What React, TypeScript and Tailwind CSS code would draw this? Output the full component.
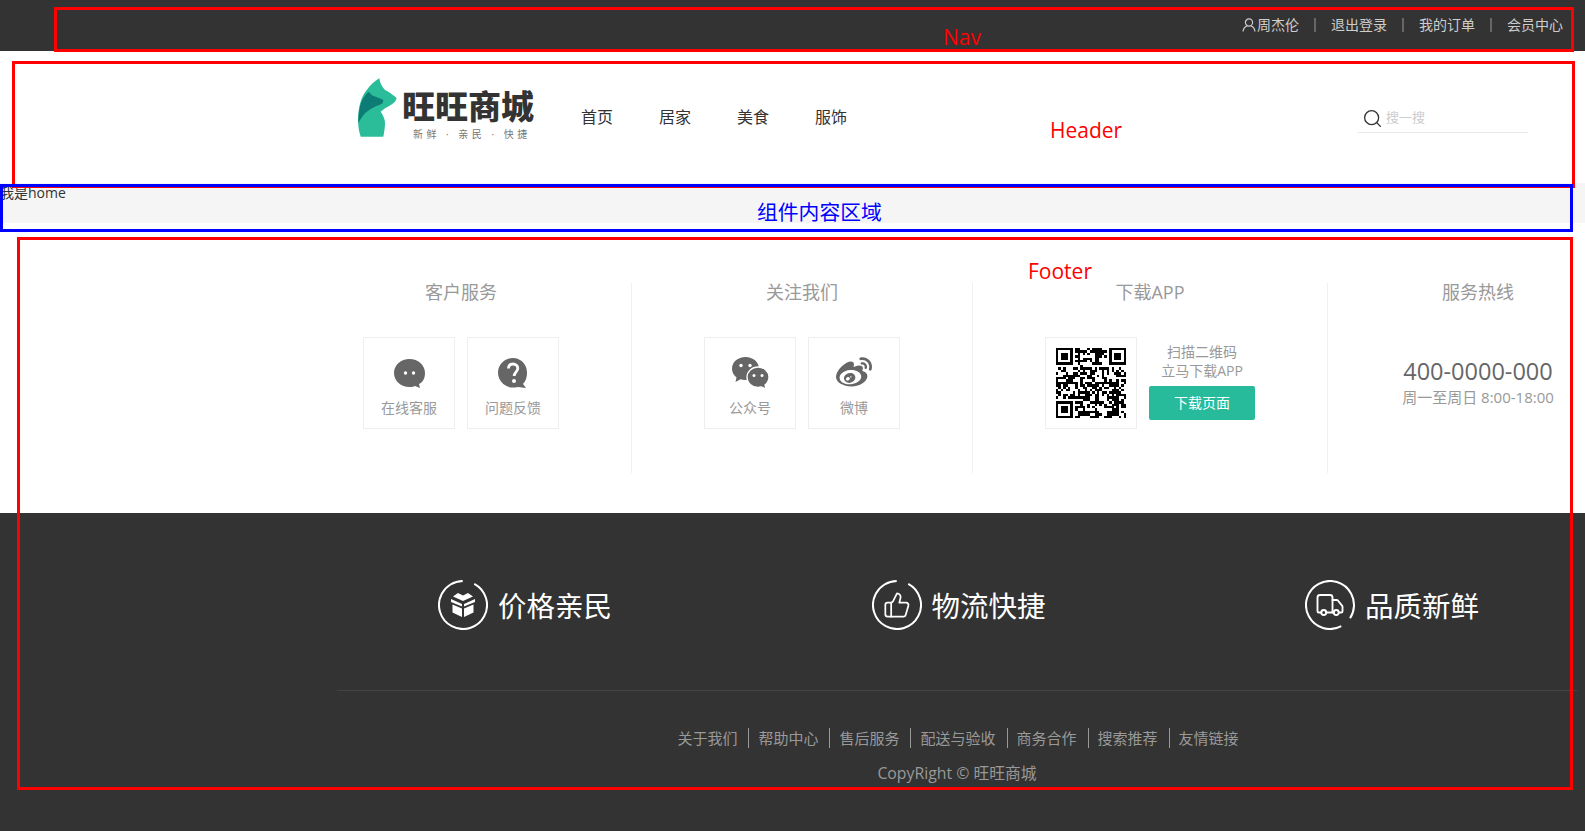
import React from "react";
import { FaWeibo } from "react-icons/fa";
import { Search, ThumbsUp, Truck } from "lucide-react";

const topLinks = ["退出登录", "我的订单", "会员中心"];
const menu = ["首页", "居家", "美食", "服饰"];
const bottomLinks = ["关于我们", "帮助中心", "售后服务", "配送与验收", "商务合作", "搜索推荐", "友情链接"];

// fake qr pattern, same result on every run
const qrSize = 29;
const qrCells = () => {
  const cells: { x: number; y: number }[] = [];
  let seed = 73;
  const inFinder = (x: number, y: number) =>
    (x < 8 && y < 8) || (x > 20 && y < 8) || (x < 8 && y > 20);
  for (let y = 0; y < qrSize; y++) {
    for (let x = 0; x < qrSize; x++) {
      seed = (seed * 1103515245 + 12345) & 0x7fffffff;
      if (!inFinder(x, y) && (seed >> 16) % 100 < 52) cells.push({ x, y });
    }
  }
  return cells;
};

const Finder = ({ x, y }: { x: number; y: number }) => (
  <g>
    <path d={`M${x} ${y}h7v7h-7z M${x + 1} ${y + 1}v5h5v-5z`} fillRule="evenodd" />
    <rect x={x + 2} y={y + 2} width="3" height="3" />
  </g>
);

const QrCode = () => (
  <svg viewBox={`0 0 ${qrSize} ${qrSize}`} className="w-[70px] h-[70px]" shapeRendering="crispEdges" fill="#000">
    {qrCells().map((c) => (
      <rect key={`${c.x}-${c.y}`} x={c.x} y={c.y} width="1" height="1" />
    ))}
    <Finder x={0} y={0} />
    <Finder x={22} y={0} />
    <Finder x={0} y={22} />
  </svg>
);

const Logo = () => (
  <svg viewBox="0 0 46 60" className="w-[46px] h-[60px]">
    <path
      d="M21.300 0.300 C22 5 24 9 27 12 C31 13.500 35 17 38.700 20.300 L37 23.700 C34 26.500 30 28.500 27 30.300 L22.700 33.700 C25 37 27 41 27 45 C27 50 26 55 25.300 58.700 L2.700 58.700 C1.500 55 0.500 51 0.300 47 C0 40 0.300 34 1.300 28.700 C3 21 5.500 16 8.700 12 C12 7 17 3 21.300 0.300 Z"
      fill="#2bbd99"
    />
    <path
      d="M10.300 13.700 C12 15 13.500 17 15.300 18 C18.500 19 22 20 25.300 22 L24.700 25.300 C22 27 19.500 27.500 17 28.700 C13 30.500 10 32.500 7 35.300 C4 38.500 2 42 0.300 45.300 C0.200 40 0.500 36 1.300 32 C2 27.500 3.500 23.500 5.300 20.300 C7 17.500 8.500 15.500 10.300 13.700 Z"
      fill="#0c7c74"
    />
  </svg>
);

const ChatIcon = () => (
  <svg viewBox="0 0 31 29" className="w-[31px] h-[29px]" fill="#666">
    <path d="M15.5 0C24 0 31 6 31 14 C31 19 29 23 25 25 L26 29 L21 27 C19 28 17 28 15.5 28 C7 28 0 22 0 14 C0 6 7 0 15.5 0Z" />
    <circle cx="11.5" cy="14" r="1.7" fill="#fff" />
    <circle cx="19.5" cy="14" r="1.7" fill="#fff" />
  </svg>
);

const QuestionIcon = () => (
  <svg viewBox="0 0 30 30" className="w-[30px] h-[30px]" fill="#666">
    <path d="M15 0C23 0 29 6.500 29 14.500 C29 19 28 23 25 26 L28 30 L20 29 C18 29.500 16 29.500 15 29.500 C7 29.500 0 23 0 14.500 C0 6.500 7 0 15 0Z" />
    <path d="M10.500 10.500 C10.500 7.500 12.500 6 15 6 C17.800 6 19.800 7.800 19.800 10.300 C19.800 13.800 16.200 14 16.200 18" fill="none" stroke="#fff" strokeWidth="2.800" />
    <circle cx="16" cy="23" r="2" fill="#fff" />
  </svg>
);

const WechatIcon = () => (
  <svg viewBox="0 0 37 33" className="w-[37px] h-[33px]" fill="#666">
    <path d="M13.500 0C21 0 27 5 27 11.500 C27 18 21 23 13.500 23 C11.500 23 10 22.800 8.500 22.300 L3.500 25 L4.500 20.500 C1.500 18.200 0 15 0 11.500 C0 5 6 0 13.500 0Z" />
    <circle cx="9" cy="8.500" r="1.700" fill="#fff" />
    <circle cx="18" cy="8.500" r="1.700" fill="#fff" />
    <path
      d="M26 10C32 10 37 14.500 37 20 C37 23.300 35.500 26 33 28 L34 32 L29.500 30 C28.500 30.200 27 30.500 26 30.500 C20 30.500 15 26 15 20 C15 14.500 20 10 26 10Z"
      stroke="#fff"
      strokeWidth="1.300"
    />
    <circle cx="22" cy="18.500" r="1.500" fill="#fff" />
    <circle cx="30" cy="18.500" r="1.500" fill="#fff" />
  </svg>
);

const Ring = ({ rotate, children }: { rotate: number; children: React.ReactNode }) => (
  <div className="relative w-[50px] h-[50px] flex items-center justify-center text-white shrink-0">
    <svg viewBox="0 0 50 50" className="absolute inset-0 w-[50px] h-[50px]">
      <circle
        cx="25"
        cy="25"
        r="24"
        fill="none"
        stroke="#fff"
        strokeWidth="2"
        pathLength={100}
        strokeDasharray="92 8"
        transform={`rotate(${rotate} 25 25)`}
      />
    </svg>
    {children}
  </div>
);

const BoxIcon = () => (
  <svg viewBox="0 0 26 26" className="w-[26px] h-[26px]" fill="#fff">
    <path d="M13 9 L3 4.500 L8 1 L13 3.500 L18 1 L23 4.500 Z" />
    <path d="M1 7 L12 12 L12 14.500 L1 10 Z" />
    <path d="M25 7 L14 12 L14 14.500 L25 10 Z" />
    <path d="M2.500 12.500 L12 16.500 L12 25 L2.500 20.500 Z" />
    <path d="M23.500 12.500 L14 16.500 L14 25 L23.500 20.500 Z" />
  </svg>
);

const Box = ({ children, className = "" }: { children: React.ReactNode; className?: string }) => (
  <div className={`w-[92px] h-[92px] border border-[#eeeeee] ${className}`}>{children}</div>
);

const IconBox = ({ icon, label }: { icon: React.ReactNode; label: string }) => (
  <Box className="flex flex-col items-center">
    <div className="h-[30px] mt-[20px] flex items-center justify-center">{icon}</div>
    <p className="mt-[10px] text-[14px] leading-5 text-[#999]">{label}</p>
  </Box>
);

const ColTitle = ({ children }: { children: React.ReactNode }) => (
  <p className="text-[18px] leading-[19px] text-[#999] text-center">{children}</p>
);

const Feature = ({ icon, text }: { icon: React.ReactNode; text: string }) => (
  <div className="flex items-start gap-[10px]">
    {icon}
    <span className="mt-[1px] w-[112px] whitespace-nowrap text-[28.500px] leading-[50px] text-white">{text}</span>
  </div>
);

const App = () => {
  return (
    <div className="relative h-screen overflow-hidden bg-white font-['Open_Sans','Noto_Sans_CJK_SC',sans-serif] text-[14px] text-[#333]">
      {/* nav */}
      <div className="h-[51px] bg-[#333] flex justify-end items-center pr-[22px] pb-[2px] text-[14px] text-[#cdcdcd]">
        <div className="flex items-center gap-[1px]">
          <svg viewBox="0 0 14 14" className="w-[14px] h-[14px]" fill="none" stroke="#cdcdcd" strokeWidth="1.200">
            <circle cx="7" cy="4.500" r="3.600" />
            <path d="M1 13.500 C1.500 10 3.500 8.500 5 8 M13 13.500 C12.500 10 10.500 8.500 9 8" />
          </svg>
          <span>周杰伦</span>
        </div>
        {topLinks.map((item) => (
          <div key={item} className="flex items-center">
            <span className="w-[2px] h-[14px] mx-[15px] bg-[#666]" />
            <span>{item}</span>
          </div>
        ))}
      </div>

      {/* header */}
      <div className="h-[132px] flex items-center pl-[358px]">
        <div className="flex self-start mt-[27px] w-[223px]">
          <Logo />
          <div className="ml-[-2px] mt-[12px]">
            <p className="text-[33px] leading-[34px] font-black whitespace-nowrap text-[#333]">旺旺商城</p>
            <p className="mt-[4px] ml-[11px] text-[10px] leading-3 tracking-[3.500px] text-[#777] whitespace-nowrap">
              新鲜 · 亲民 · 快捷
            </p>
          </div>
        </div>
        <div className="flex gap-[46px] text-[16px] leading-6">
          {menu.map((item) => (
            <span key={item}>{item}</span>
          ))}
        </div>
        <div className="ml-auto mr-[57px] mt-[3px] w-[170px] h-[29px] border-b border-[#e7e7e7] flex items-center pl-[4px]">
          <Search size={21} strokeWidth={1.5} className="text-[#333]" />
          <span className="ml-[3px] text-[13px] text-[#ccc]">搜一搜</span>
        </div>
      </div>

      {/* home */}
      <div className="h-[40px] bg-[#f5f5f5] leading-5">我是home</div>

      {/* footer service */}
      <div className="h-[290px] pt-[60px] pl-[291px] flex">
        <div className="w-[341px] h-[190px] shrink-0 border-r border-[#f0f0f0]">
          <ColTitle>客户服务</ColTitle>
          <div className="mt-[35px] flex justify-center gap-[12px]">
            <IconBox icon={<ChatIcon />} label="在线客服" />
            <IconBox icon={<QuestionIcon />} label="问题反馈" />
          </div>
        </div>
        <div className="w-[341px] h-[190px] shrink-0 border-r border-[#f0f0f0]">
          <ColTitle>关注我们</ColTitle>
          <div className="mt-[35px] flex justify-center gap-[12px]">
            <IconBox icon={<WechatIcon />} label="公众号" />
            <IconBox icon={<FaWeibo size={36} color="#666" />} label="微博" />
          </div>
        </div>
        <div className="w-[355px] h-[190px] shrink-0 border-r border-[#f0f0f0]">
          <ColTitle>下载APP</ColTitle>
          <div className="mt-[35px] flex justify-center gap-[12px]">
            <Box className="flex items-center justify-center">
              <QrCode />
            </Box>
            <div className="w-[106px] text-center text-[14px] leading-[19px] text-[#999] pt-[5px]">
              <p>扫描二维码</p>
              <p>立马下载APP</p>
              <div className="mt-[6px] h-[34px] rounded-[2px] bg-[#27BA9B] text-white leading-[33px]">下载页面</div>
            </div>
          </div>
        </div>
        <div className="w-[300px] h-[190px] shrink-0 text-center">
          <ColTitle>服务热线</ColTitle>
          <p className="mt-[54px] text-[23.500px] leading-[30px] text-[#666]">400-0000-000</p>
          <p className="mt-[1px] text-[15px] leading-5 text-[#999]">周一至周日 8:00-18:00</p>
        </div>
      </div>

      {/* footer dark */}
      <div className="h-[318px] bg-[#333]">
        <div className="ml-[337px] w-[1240px]">
          <div className="h-[178px] pt-[67px] pl-[101px] pr-[100px] flex items-start justify-between border-b border-[#444]">
            <Feature
              icon={
                <Ring rotate={-62}>
                  <BoxIcon />
                </Ring>
              }
              text="价格亲民"
            />
            <Feature
              icon={
                <Ring rotate={-62}>
                  <ThumbsUp size={28} strokeWidth={1.5} />
                </Ring>
              }
              text="物流快捷"
            />
            <Feature
              icon={
                <Ring rotate={62}>
                  <Truck size={30} strokeWidth={1.5} />
                </Ring>
              }
              text="品质新鲜"
            />
          </div>
          <div className="mt-[37px] pl-[4px] flex justify-center">
            {bottomLinks.map((item, index) => (
              <span
                key={item}
                className={`pl-[9px] pr-[11px] h-[20px] leading-5 text-[15px] text-[#999] ${index > 0 ? "border-l border-[#999]" : ""}`}
              >
                {item}
              </span>
            ))}
          </div>
          <p className="mt-[15px] text-center text-[15.800px] leading-5 text-[#999]">CopyRight © 旺旺商城</p>
        </div>
      </div>

      {/* annotations drawn on top of the page */}
      <div className="absolute left-[54px] top-[7px] w-[1520px] h-[45px] border-[3px] border-[#f00]" />
      <span className="absolute left-[943px] top-[23px] text-[21px] leading-7 text-[#f00]">Nav</span>
      <div className="absolute left-[12px] top-[61px] w-[1563px] h-[127px] border-[3px] border-[#f00]" />
      <span className="absolute left-[1050px] top-[116px] text-[21px] leading-7 text-[#f00]">Header</span>
      <div className="absolute left-0 top-[184px] w-[1573px] h-[48px] border-[3px] border-[#00f]" />
      <span className="absolute left-[757px] top-[198px] text-[20.800px] leading-7 text-[#00f]">组件内容区域</span>
      <div className="absolute left-[17px] top-[237px] w-[1556px] h-[553px] border-[3px] border-[#f00]" />
      <span className="absolute left-[1028px] top-[257px] text-[21px] leading-7 text-[#f00]">Footer</span>
    </div>
  );
};

export default App;
